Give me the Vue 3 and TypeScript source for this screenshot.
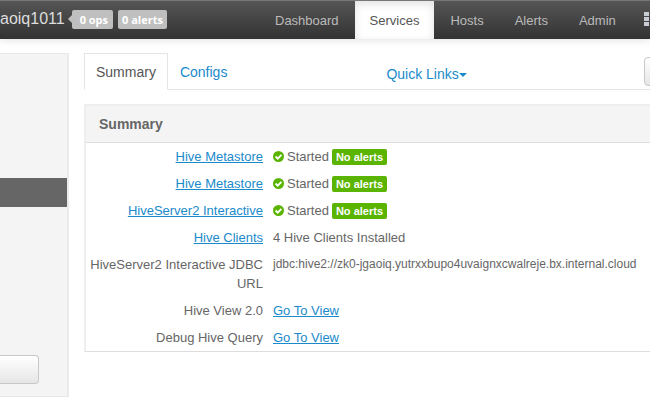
<script setup lang="ts">
interface ServiceRow {
  label: string
  labelLink?: boolean
  started?: boolean
  text?: string
  valueLink?: boolean
  url?: boolean
}

const navItems: string[] = ['Dashboard', 'Services', 'Hosts', 'Alerts', 'Admin']
const activeNav = 'Services'

const rows: ServiceRow[] = [
  { label: 'Hive Metastore', labelLink: true, started: true },
  { label: 'Hive Metastore', labelLink: true, started: true },
  { label: 'HiveServer2 Interactive', labelLink: true, started: true },
  { label: 'Hive Clients', labelLink: true, text: '4 Hive Clients Installed' },
  {
    label: 'HiveServer2 Interactive JDBC URL',
    text: 'jdbc:hive2://zk0-jgaoiq.yutrxxbupo4uvaignxcwalreje.bx.internal.cloud',
    url: true,
  },
  { label: 'Hive View 2.0', text: 'Go To View', valueLink: true },
  { label: 'Debug Hive Query', text: 'Go To View', valueLink: true },
]
</script>

<template>
  <div class="page">
    <header class="navbar">
      <div class="brand">
        <span class="cluster">aoiq1011</span>
        <span class="badge ops">0 ops</span>
        <span class="badge">0 alerts</span>
      </div>
      <nav class="nav">
        <a
          v-for="item in navItems"
          :key="item"
          href="#"
          class="nav-link"
          :class="{ active: item === activeNav }"
        >{{ item }}</a>
        <a href="#" class="nav-link grid-link" aria-label="Views">
          <svg class="grid-icon" width="16" height="14" viewBox="0 0 16 14">
            <path
              d="M0 0h5v4H0zM6 0h4v4H6zM11 0h5v4h-5zM0 5h5v4H0zM6 5h4v4H6zM11 5h5v4h-5zM0 10h5v4H0zM6 10h4v4H6zM11 10h5v4h-5z"
              fill="#c8ccd4"
            />
          </svg>
        </a>
      </nav>
    </header>

    <div class="content">
      <aside class="sidebar">
        <div class="selected"></div>
        <button type="button" class="btn side-btn" aria-label="Actions"></button>
      </aside>

      <main class="main">
        <div class="tabs">
          <a href="#" class="tab current">Summary</a>
          <a href="#" class="tab">Configs</a>
          <a href="#" class="quick">Quick Links<span class="caret"></span></a>
          <button type="button" class="btn action-btn" aria-label="Service Actions"></button>
        </div>

        <section class="panel">
          <h4 class="panel-title">Summary</h4>
          <table class="details">
            <tbody>
              <tr v-for="(row, i) in rows" :key="i">
                <th scope="row">
                  <a v-if="row.labelLink" href="#">{{ row.label }}</a>
                  <template v-else>{{ row.label }}</template>
                </th>
                <td :class="{ url: row.url }">
                  <div v-if="row.started" class="status">
                    <svg width="11" height="11" viewBox="0 0 12 12">
                      <circle cx="6" cy="6" r="6" fill="#5ab400" />
                      <path d="M2.8 6l2.3 2.4 4.1-4.2" fill="none" stroke="#fff" stroke-width="2" />
                    </svg>
                    <span>Started</span>
                    <span class="label-ok">No alerts</span>
                  </div>
                  <a v-else-if="row.valueLink" href="#">{{ row.text }}</a>
                  <template v-else>{{ row.text }}</template>
                </td>
              </tr>
            </tbody>
          </table>
        </section>
      </main>
    </div>
  </div>
</template>

<style>
body {
  margin: 0;
  background: #fff;
}
</style>

<style scoped>
.page {
  overflow: hidden;
  font-family: "Liberation Sans", Arial, sans-serif;
  font-size: 13px;
  line-height: 19px;
  color: #666;
}
a {
  color: #1a8acb;
}
.navbar {
  display: flex;
  height: 38px;
  border-top: 1px solid #777;
  background: linear-gradient(#555, #333);
  box-shadow: 0 1px 8px rgba(0, 0, 0, 0.12);
}
.brand {
  display: flex;
  align-items: center;
  flex: 0 0 260px;
  gap: 5px;
}
.cluster {
  font-size: 16px;
  color: #ddd;
  margin-right: 2px;
  padding-bottom: 4px;
}
.badge {
  position: relative;
  box-sizing: border-box;
  height: 19px;
  padding: 0 4px;
  border-radius: 2px;
  background: #bfbfbf;
  color: #fff;
  font-family: "Open Sans", sans-serif;
  font-size: 11px;
  font-weight: 700;
  margin-bottom: 1px;
}
.ops {
  padding: 0 5px 0 8px;
}
.ops::before {
  content: "";
  position: absolute;
  left: -4px;
  top: 5px;
  border: 4px solid transparent;
  border-left: 0;
  border-right-color: #bfbfbf;
}
.nav {
  display: flex;
  flex: none;
  gap: 1px;
}
.nav-link {
  display: flex;
  align-items: center;
  padding: 0 15px;
  color: #bbb;
  text-decoration: none;
}
.nav-link.active {
  background: #fff;
  color: #555;
  box-shadow: inset 0 3px 8px rgba(0, 0, 0, 0.12);
}
.grid-link {
  padding: 0 12px;
}
.grid-icon {
  margin-bottom: 2px;
}
.content {
  display: flex;
  align-items: flex-start;
  gap: 15px;
  padding-top: 14px;
}
.sidebar {
  box-sizing: border-box;
  flex: 0 0 69px;
  padding: 124px 0 12px;
  border: 1px solid #e8e8e8;
  border-left: 0;
  border-right: 2px solid #ebebeb;
  background: #f4f4f4;
}
.selected {
  height: 29px;
  background: #666;
}
.btn {
  box-sizing: border-box;
  height: 29px;
  border: 1px solid #c8c8c8;
  border-radius: 4px;
  background: linear-gradient(#fff, #e6e6e6);
}
.side-btn {
  display: block;
  width: 39px;
  margin-top: 148px;
  border-left: 0;
  border-radius: 0 4px 4px 0;
}
.main {
  flex: 1;
  min-width: 0;
}
.tabs {
  display: flex;
  border-bottom: 1px solid #e5e5e5;
}
.tab {
  box-sizing: border-box;
  height: 37px;
  margin-bottom: -1px;
  padding: 9px 11px;
  border: 1px solid transparent;
  font-size: 14px;
  text-decoration: none;
}
.current {
  border-color: #e5e5e5;
  border-bottom-color: #fff;
  background: #fff;
  color: #555;
}
.quick {
  margin-left: 147px;
  padding-top: 12px;
  font-size: 14px;
  text-decoration: none;
}
.caret {
  display: inline-block;
  border: 4px solid transparent;
  border-top-color: currentColor;
  border-bottom: 0;
  vertical-align: middle;
}
.action-btn {
  flex: none;
  width: 60px;
  margin: 4px -54px 0 auto;
}
.panel {
  margin-top: 14px;
  border: 2px solid #eee;
  border-right: 0;
  border-bottom: 1px solid #ddd;
}
.panel-title {
  margin: 0;
  padding: 9px 13px 8px;
  border-bottom: 1px solid #ddd;
  background: #f4f4f4;
  font-size: 14px;
}
.details {
  width: 100%;
  table-layout: fixed;
  border-collapse: collapse;
}
th,
td {
  padding: 4px 5px;
  font-weight: 400;
  vertical-align: top;
}
th {
  width: 177px;
  padding-left: 0;
  text-align: right;
}
td {
  padding-right: 0;
  text-align: left;
  white-space: nowrap;
}
.url {
  font-size: 12px;
}
.status {
  display: flex;
  align-items: center;
  gap: 3px;
  height: 19px;
}
.label-ok {
  height: 16px;
  padding: 0 4px;
  border-radius: 2px;
  background: #5ab400;
  color: #fff;
  font-size: 11px;
  font-weight: 700;
  line-height: 16px;
}
</style>
